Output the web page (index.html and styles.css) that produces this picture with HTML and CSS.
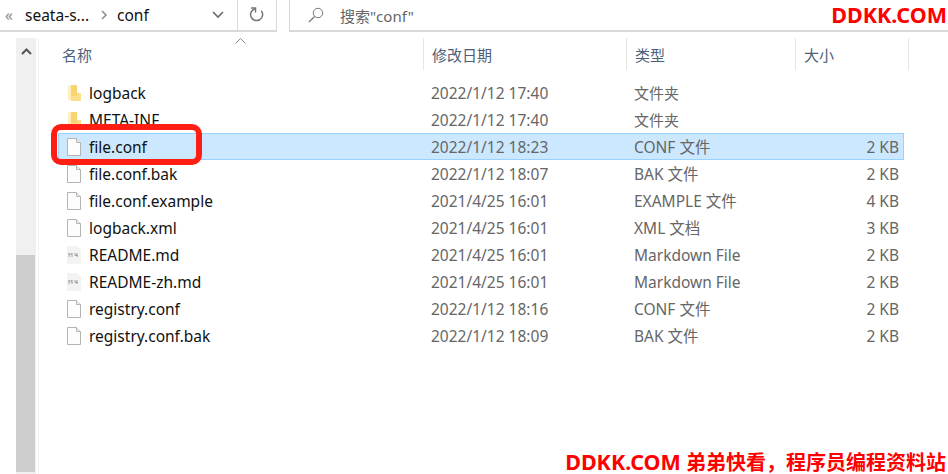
FILE: index.html
```html
<!DOCTYPE html>
<html lang="zh-CN">
<head>
    <meta charset="UTF-8">
    <title>conf</title>
    <link rel="stylesheet" href="styles.css">
</head>
<body>
    <svg class="defs" width="0" height="0">
        <symbol id="folder" viewBox="0 0 16 18">
            <path d="M5 1h6v8h4v8H5z" fill="#fbdf8c"/>
            <path d="M5 1h6v11H5z" fill="#f8d473"/>
            <path d="M2 2l3-1v16l-2-1-1-1z" fill="#fdeebc"/>
        </symbol>
        <symbol id="file" viewBox="0 0 16 18">
            <path d="M1.500.5h9l4 4v13h-13z" fill="#fdfdfd" stroke="#b4b4b4"/>
            <path d="M10.500.5v4h4" fill="#eee" stroke="#b4b4b4"/>
        </symbol>
        <symbol id="md" viewBox="0 0 16 18">
            <path d="M1 0h10l4 4v14H1z" fill="#f3f3f3"/>
            <path d="M3 11V7l1.500 2L6 7v4M9 7v2.500h3M11 7v4" fill="none" stroke="#a0a0a0"/>
        </symbol>
    </svg>

    <div class="window">
        <div class="toolbar">
            <div class="address">
                <span class="crumb-more">«</span>
                <span class="crumb">seata-s...</span>
                <svg class="crumb-arrow" width="7" height="10" viewBox="0 0 7 10"><path d="M1 1l4 4-4 4" fill="none" stroke="#8a8a8a" stroke-width="1.500"/></svg>
                <span class="crumb">conf</span>
                <svg class="drop" width="12" height="8" viewBox="0 0 12 8"><path d="M1 1l5 5 5-5" fill="none" stroke="#6b6b6b" stroke-width="1.600"/></svg>
                <div class="refresh">
                    <svg width="16" height="16" viewBox="0 0 16 16"><path d="M4.500 2.500A6 6 0 1 0 11 2.800" transform="rotate(16 8 8)" fill="none" stroke="#777" stroke-width="1.500"/><path d="M2 1h4.500v4.500" fill="none" stroke="#777" stroke-width="1.500"/></svg>
                </div>
            </div>
            <div class="search">
                <svg width="16" height="16" viewBox="0 0 16 16"><circle cx="10" cy="6" r="4.700" fill="none" stroke="#777"/><path d="M6.500 9.500L1 15" stroke="#777" stroke-width="1.200"/></svg>
                <span>搜索"conf"</span>
            </div>
        </div>

        <div class="main">
            <div class="scrollbar">
                <svg class="scroll-up" width="11" height="7" viewBox="0 0 11 7"><path d="M1 6l4.500-4.500L10 6" fill="none" stroke="#555" stroke-width="2"/></svg>
                <div class="thumb"></div>
            </div>
            <div class="list">
                <svg class="sort" width="11" height="6" viewBox="0 0 11 6"><path d="M.5 5.500l5-5 5 5" fill="none" stroke="#888"/></svg>
                <div class="head">
                    <div>名称</div>
                    <div>修改日期</div>
                    <div>类型</div>
                    <div>大小</div>
                </div>
                <div class="row">
                    <div class="name"><svg class="ico"><use href="#folder"/></svg>logback</div>
                    <div>2022/1/12 17:40</div><div class="zh">文件夹</div><div class="size"></div>
                </div>
                <div class="row">
                    <div class="name"><svg class="ico"><use href="#folder"/></svg>META-INF</div>
                    <div>2022/1/12 17:40</div><div class="zh">文件夹</div><div class="size"></div>
                </div>
                <div class="row selected">
                    <div class="name"><svg class="ico"><use href="#file"/></svg>file.conf</div>
                    <div>2022/1/12 18:23</div><div>CONF 文件</div><div class="size">2 KB</div>
                </div>
                <div class="row">
                    <div class="name"><svg class="ico"><use href="#file"/></svg>file.conf.bak</div>
                    <div>2022/1/12 18:07</div><div>BAK 文件</div><div class="size">2 KB</div>
                </div>
                <div class="row">
                    <div class="name"><svg class="ico"><use href="#file"/></svg>file.conf.example</div>
                    <div>2021/4/25 16:01</div><div>EXAMPLE 文件</div><div class="size">4 KB</div>
                </div>
                <div class="row">
                    <div class="name"><svg class="ico"><use href="#file"/></svg>logback.xml</div>
                    <div>2021/4/25 16:01</div><div>XML 文档</div><div class="size">3 KB</div>
                </div>
                <div class="row">
                    <div class="name"><svg class="ico"><use href="#md"/></svg>README.md</div>
                    <div>2021/4/25 16:01</div><div>Markdown File</div><div class="size">2 KB</div>
                </div>
                <div class="row">
                    <div class="name"><svg class="ico"><use href="#md"/></svg>README-zh.md</div>
                    <div>2021/4/25 16:01</div><div>Markdown File</div><div class="size">2 KB</div>
                </div>
                <div class="row">
                    <div class="name"><svg class="ico"><use href="#file"/></svg>registry.conf</div>
                    <div>2022/1/12 18:16</div><div>CONF 文件</div><div class="size">2 KB</div>
                </div>
                <div class="row">
                    <div class="name"><svg class="ico"><use href="#file"/></svg>registry.conf.bak</div>
                    <div>2022/1/12 18:09</div><div>BAK 文件</div><div class="size">2 KB</div>
                </div>
            </div>
        </div>

        <div class="highlight"></div>
        <div class="mark mark-top"><span class="latin">DDKK.COM</span></div>
        <div class="mark mark-bottom"><span class="latin">DDKK.COM</span> 弟弟快看，程序员编程资料站</div>
    </div>
</body>
</html>
```

FILE: styles.css
```css
* {
    box-sizing: border-box;
}

body {
    margin: 0;
    background-color: white;
    font-family: "Noto Sans", "Noto Sans CJK SC", sans-serif;
    font-size: 15.5px;
    color: #666;
}

.defs {
    display: block;
}

.window {
    position: relative;
    width: 948px;
    height: 474px;
    overflow: hidden;
}

/* barra superior */
.toolbar {
    display: flex;
    height: 32px;
    gap: 12px;
}

.address {
    display: flex;
    align-items: center;
    width: 277px;
    padding-left: 5px;
    border-right: 1px solid #d9d9d9;
    border-bottom: 2px solid #d9d9d9;
    color: #111;
}

.crumb-more {
    width: 20px;
    color: #888;
}

.crumb-arrow {
    margin: 0 9px 0 12px;
}

.drop {
    margin-left: auto;
    margin-right: 13px;
}

.refresh {
    display: flex;
    align-items: center;
    justify-content: center;
    width: 39px;
    height: 100%;
    border-left: 1px solid #d9d9d9;
}

.search {
    display: flex;
    flex: 1;
    align-items: center;
    gap: 16px;
    padding-left: 18px;
    border-left: 1px solid #d9d9d9;
    border-bottom: 2px solid #d9d9d9;
    font-size: 15px;
}

/* area principal */
.main {
    display: flex;
    height: 442px;
    padding: 6px 0 0 16px;
}

.scrollbar {
    position: relative;
    width: 20px;
    height: 436px;
    background-color: #f0f0f0;
}

.scroll-up {
    position: absolute;
    left: 5px;
    top: 10px;
}

.thumb {
    position: absolute;
    left: 0;
    right: 1px;
    top: 217px;
    bottom: 2px;
    background-color: #cdcdcd;
}

.list {
    position: relative;
    width: 871px;
    margin-left: 2px;
    padding-left: 19px;
    border-left: 1px solid #f2f2f2;
}

.sort {
    position: absolute;
    left: 196px;
    top: 0;
}

.head {
    display: grid;
    grid-template-columns: 366px 203px 169px 113px;
    height: 32px;
    margin-bottom: 9px;
    font-size: 15px;
    color: #4c607a;
}

.head > div {
    display: flex;
    align-items: center;
    padding-left: 8px;
    border-right: 1px solid #e5e5e5;
}

.head > div:first-child {
    padding-left: 4px;
}

.row {
    display: grid;
    grid-template-columns: 364px 203px 169px 108px;
    align-items: center;
    width: 846px;
    height: 27px;
    border: 1px solid transparent;
}

.row > div {
    padding-left: 8px;
    white-space: nowrap;
}

.row > .zh {
    font-size: 15px;
}

.row > .name {
    display: flex;
    align-items: center;
    padding-left: 7px;
    color: #111;
}

.ico {
    width: 16px;
    height: 18px;
    margin-right: 7px;
    flex-shrink: 0;
}

.row > .size {
    padding-right: 4px;
    text-align: right;
}

.selected {
    background-color: #cce8ff;
    border-color: #99d1ff;
}

/* marcacoes por cima do print */
.highlight {
    position: absolute;
    left: 51px;
    top: 124px;
    width: 151px;
    height: 41px;
    border: 6px solid #ff1e14;
    border-radius: 10px;
}

.mark {
    position: absolute;
    color: #ff0000;
    font-size: 20px;
    font-weight: bold;
    line-height: 24px;
    white-space: nowrap;
}

.latin {
    font-size: 21.5px;
}

.mark-top {
    right: 1px;
    top: 3px;
}

.mark-bottom {
    right: 2px;
    top: 450px;
}
```
